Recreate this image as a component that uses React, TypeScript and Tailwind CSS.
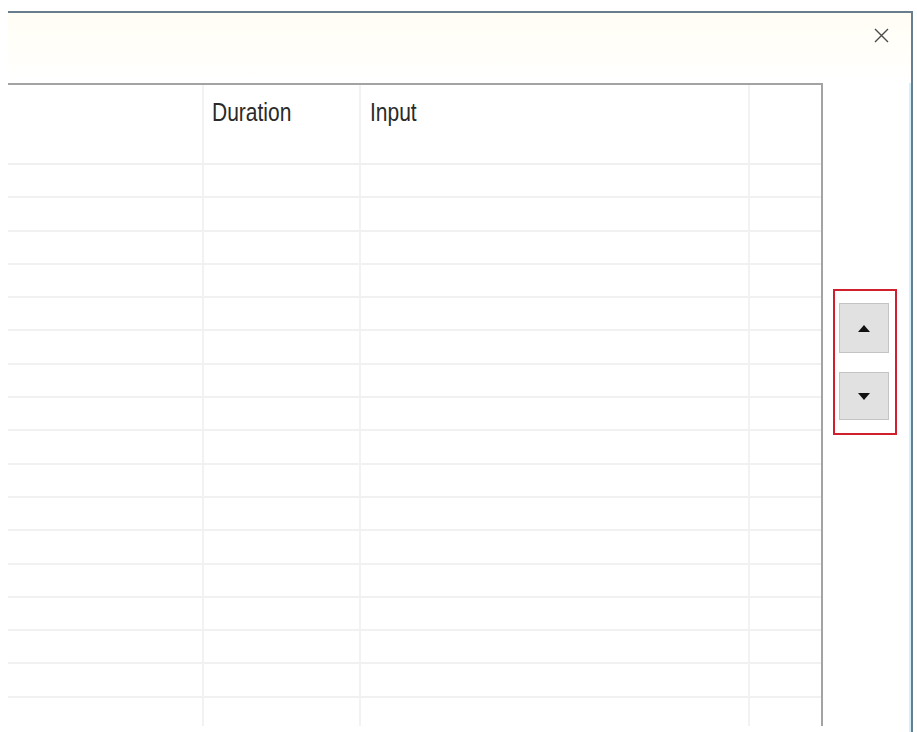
const rows = Array.from({ length: 17 }, (_, i) => i);

function Cell({ className = "" }: { className?: string }) {
  return <div className={`h-full border-r-2 border-[#f2f2f2] ${className}`} />;
}

export default function App() {
  return (
    <div className="w-[917px] h-[732px] bg-white overflow-hidden font-['Liberation_Sans',Arial,sans-serif]">
      <div className="ml-[8px] mt-[11px] w-[905px] h-[721px] border-t-2 border-r-2 border-[#687d8e] shadow-[inset_-2px_0_0_#d3f1fa] flex flex-col">
        {/* title strip */}
        <div className="h-[70px] flex items-start justify-end pr-[22px] bg-gradient-to-b from-[#fffdf4] via-[#fffef9] to-white">
          <svg width="15" height="15" viewBox="0 0 15 15" className="mt-[15px]">
            <path d="M1 1 L14 14 M14 1 L1 14" stroke="#4a4a4a" strokeWidth="1.4" fill="none" />
          </svg>
        </div>

        <div className="flex flex-1 min-h-0">
          {/* grid */}
          <div className="w-[815px] h-[643px] border-t-2 border-r-2 border-[#a3a3a3] overflow-hidden">
            <div className="h-[80px] flex border-b-2 border-[#f0f0f0]">
              <Cell className="w-[196px]" />
              <div className="w-[157px] h-full border-r-2 border-[#f2f2f2] pl-[8px] pt-[8px]">
                <span className="inline-block text-[21px] text-[#2a2a2a] origin-top scale-y-[1.2]">Duration</span>
              </div>
              <div className="w-[389px] h-full border-r-2 border-[#f2f2f2] pl-[9px] pt-[8px]">
                <span className="inline-block text-[21px] text-[#2a2a2a] origin-top scale-y-[1.2]">Input</span>
              </div>
              <div className="flex-1" />
            </div>
            {rows.map((r) => (
              <div key={r} className="h-[33.3px] flex border-b-2 border-[#f1f1f1]">
                <Cell className="w-[196px]" />
                <Cell className="w-[157px]" />
                <Cell className="w-[389px]" />
                <div className="flex-1" />
              </div>
            ))}
          </div>

          {/* move buttons */}
          <div className="flex-1 pl-[10px] pt-[206px]">
            <div className="w-[64px] h-[146px] border-2 border-[#d0202e] pt-[12px] px-[4px] flex flex-col gap-[19px]">
              <button className="w-[50px] h-[50px] bg-[#e1e1e1] border border-[#c4c4c4] flex items-center justify-center">
                <svg width="12" height="7" viewBox="0 0 12 7">
                  <path d="M6 0 L12 7 L0 7 Z" fill="#111" />
                </svg>
              </button>
              <button className="w-[50px] h-[48px] bg-[#e1e1e1] border border-[#c4c4c4] flex items-center justify-center">
                <svg width="12" height="7" viewBox="0 0 12 7">
                  <path d="M0 0 L12 0 L6 7 Z" fill="#111" />
                </svg>
              </button>
            </div>
          </div>
        </div>
      </div>
    </div>
  );
}
